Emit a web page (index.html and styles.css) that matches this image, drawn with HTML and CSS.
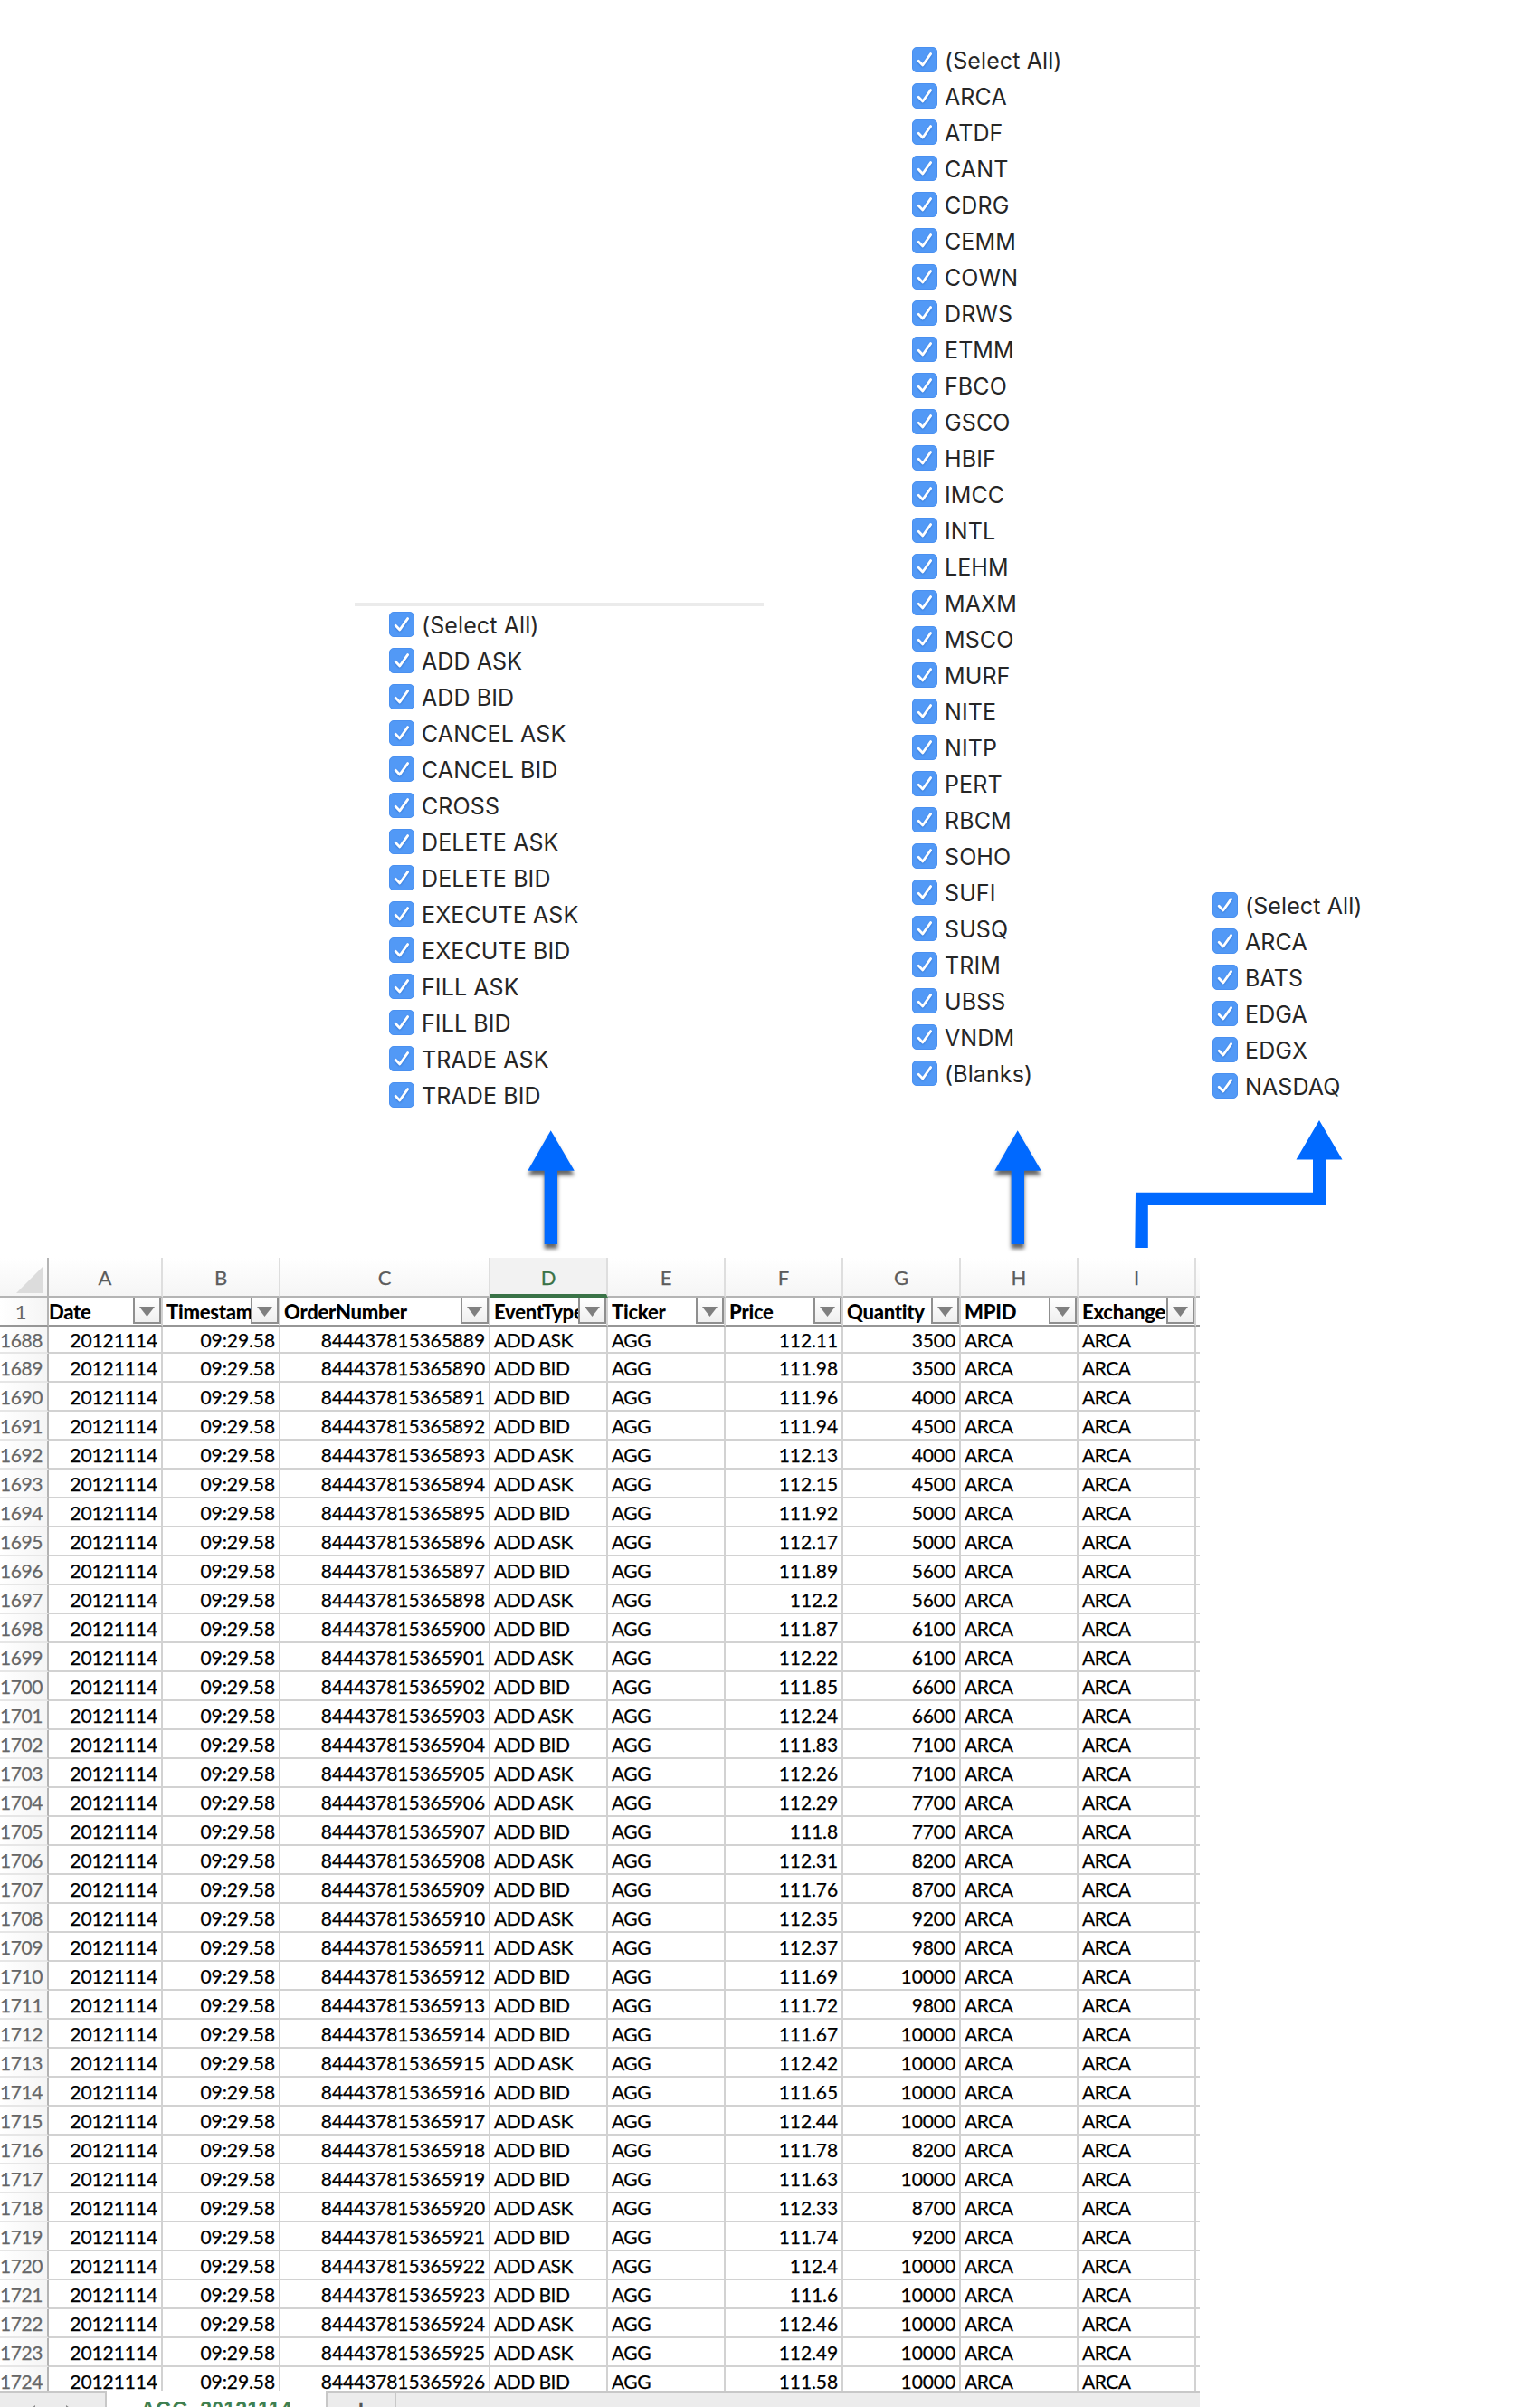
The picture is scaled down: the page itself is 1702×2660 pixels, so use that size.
FILE: index.html
```html
<!DOCTYPE html>
<html lang="en">

<head>
    <meta charset="UTF-8">
    <meta name="viewport" content="width=device-width, initial-scale=1.0">
    <title>AGG_20121114</title>
    <link rel="stylesheet" href="styles.css">
</head>

<body>
    <!-- Filter values for the EventType, MPID and Exchange columns -->
    <div class="filters">
        <div class="panel panel-event">
            <ul class="filter-list" id="eventList"></ul>
            <svg class="arrow arrow-event" width="72" height="141" viewBox="0 0 72 141">
                <path class="arrow-shadow" d="M36.7 0.3 L62.7 44.7 H44 V126 H29.7 V44.7 H11.3 Z" />
            </svg>
        </div>
        <div class="panel panel-mpid">
            <ul class="filter-list" id="mpidList"></ul>
            <svg class="arrow arrow-mpid" width="72" height="141" viewBox="0 0 72 141">
                <path class="arrow-shadow" d="M36.7 0.3 L62.7 44.7 H44 V126 H29.7 V44.7 H11.3 Z" />
            </svg>
        </div>
        <div class="panel panel-exchange">
            <ul class="filter-list" id="exchangeList"></ul>
            <svg class="arrow" width="260" height="152" viewBox="0 0 260 152">
                <path d="M218 0 L243.5 43.5 H225 V94 H28.8 V141 H14.3 L15 79.7 H211 V43.5 H192.5 Z" />
            </svg>
        </div>
    </div>

    <div class="sheet">
        <div class="grid">
            <div class="row letters" id="letters"></div>
            <div class="row titles" id="titles"></div>
            <div id="rows"></div>
        </div>
        <div class="tabs">
            <div class="tab-nav">
                <svg width="60" height="8" viewBox="0 0 60 8">
                    <path d="M11 6 L4 11 H11 Z M45 6 L52 11 H45 Z" />
                </svg>
            </div>
            <div class="tab-active">AGG_20121114</div>
            <div class="tab-add">+</div>
            <div class="tab-rest"></div>
        </div>
    </div>

    <script src="script.js"></script>
</body>

</html>
```
FILE: styles.css
```css
* {
    box-sizing: border-box;
}

body {
    margin: 0;
    width: 1702px;
    height: 2660px;
    overflow: hidden;
    background: #fff;
    font-family: Lato, "Liberation Sans", sans-serif;
}

/* Filter lists */
.filters {
    display: flex;
    align-items: flex-end;
    height: 1390px;
    padding-left: 392px;
}

.filter-list {
    list-style: none;
    margin: 0;
    padding: 0;
}

.filter-list li {
    display: flex;
    align-items: center;
    height: 40px;
    gap: 8px;
    font-family: Inter, "Liberation Sans", sans-serif;
    font-size: 25px;
    letter-spacing: 0.1px;
    color: #262626;
    white-space: nowrap;
}

.filter-list span {
    padding-top: 2px;
}

.check {
    flex: none;
    width: 28px;
    height: 28px;
    border-radius: 5px;
    background: #5299f6;
    border: 1px solid #4a90f0;
}

.check path {
    fill: none;
    stroke: #fff;
    stroke-width: 2.8;
    stroke-linecap: round;
    stroke-linejoin: round;
    filter: drop-shadow(0 1px 1px rgba(0, 60, 150, 0.35));
}

.panel-event {
    width: 452px;
    margin-right: 164px;
    border-top: 4px solid #ebebeb;
}

.panel-event .filter-list {
    padding-left: 38px;
}

.panel-mpid {
    width: 232px;
}

.panel-exchange .filter-list {
    padding-left: 100px;
}

.arrow {
    display: block;
    fill: #0069ff;
}

.arrow-event {
    margin: 19px 0 0 180px;
}

.arrow-mpid {
    margin: 43px 0 0 80px;
}

.arrow-shadow {
    filter: drop-shadow(0 5px 2px rgba(0, 0, 0, 0.6));
}

.panel-exchange .arrow {
    margin-top: 18px;
}

/* Spreadsheet */
.sheet {
    width: 1326px;
    height: 1270px;
}

.grid {
    height: 1252px;
    overflow: hidden;
}

.row {
    display: grid;
    grid-template-columns: 54px 126px 130px 232px repeat(6, 130px) 4px;
    height: 32px;
    font-size: 21px;
    line-height: 30px;
    color: #000;
}

.row > div {
    border-right: 2px solid #d2d2d2;
    border-bottom: 2px solid #d2d2d2;
    padding: 1px 4px 0 4px;
    white-space: nowrap;
    overflow: hidden;
    -webkit-text-stroke: 0.25px currentColor;
}

.row > div:last-child {
    border-right: none;
    padding: 0;
}

.row > .num {
    text-align: right;
    letter-spacing: -0.1px;
}

.row > .txt {
    letter-spacing: -0.5px;
}

.row > .row-no {
    padding: 1px 5px 0 0;
    text-align: right;
    color: #666;
    border-right-color: #b4b4b4;
    border-bottom-color: #e6e6e6;
    background: linear-gradient(to right, #fff, #f5f5f5);
    letter-spacing: -0.4px;
}

#rows .row:first-child {
    height: 30px;
    line-height: 27px;
}

.letters {
    height: 44px;
}

.row.letters > div {
    padding: 0;
    text-align: center;
    line-height: 44px;
    font-size: 22px;
    color: #5c5c5c;
    border-right-color: #dedede;
    border-bottom-color: #b4b4b4;
    background: linear-gradient(#fff, #f5f5f5);
}

.row.letters > .corner {
    display: flex;
    justify-content: flex-end;
    padding: 9px 4px 0 0;
    border-right-color: #b4b4b4;
}

.row.letters > .selected {
    color: #3a7347;
    background: #f2f2f2;
    border-bottom: 4px solid #3a7347;
}

.row.titles > div {
    display: flex;
    justify-content: space-between;
    padding: 0 0 0 4px;
    border-bottom-color: #969696;
    font-weight: 900;
    font-size: 22px;
    letter-spacing: -0.25px;
    -webkit-text-stroke: 0;
    line-height: 31px;
}

.row.titles > .row-no {
    display: block;
    padding: 0 6px 0 0;
    text-align: center;
    font-weight: 400;
    background: linear-gradient(to right, #fff, #f5f5f5);
}

.row.titles > .row-no + div {
    padding-left: 0;
}

.title-text {
    flex: 1;
    min-width: 0;
    overflow: hidden;
}

.drop {
    flex: none;
    width: 31px;
    height: 29px;
    border: solid #8f8f8f;
    border-width: 0 2px 2px;
    background: linear-gradient(#fff, #efefef);
}

.drop svg {
    display: block;
    margin: 10px 0 0 5px;
    fill: #7f7f7f;
}

/* Sheet tabs */
.tabs {
    display: flex;
    height: 18px;
    overflow: hidden;
}

.tab-nav,
.tab-add,
.tab-rest {
    border-top: 2px solid #c8c8c8;
    border-right: 2px solid #c8c8c8;
    background: #ececec;
}

.tab-nav {
    width: 118px;
    padding: 8px 0 0 28px;
}

.tab-nav svg {
    display: block;
    fill: #888;
}

.tab-active {
    width: 242px;
    padding-top: 8px;
    text-align: center;
    font-family: "Liberation Sans", Arial, sans-serif;
    font-size: 23px;
    line-height: 26px;
    font-weight: bold;
    letter-spacing: 0.2px;
    color: #3f7f50;
}

.tab-add {
    width: 78px;
    border-left: 2px solid #c8c8c8;
    text-align: center;
    font: bold 28px/38px "Liberation Sans", Arial, sans-serif;
    color: #555;
}

.tab-rest {
    flex: 1;
    border-right: none;
}
```
FILE: script.js
```js
const eventTypes = ['ADD ASK', 'ADD BID', 'CANCEL ASK', 'CANCEL BID', 'CROSS', 'DELETE ASK', 'DELETE BID',
    'EXECUTE ASK', 'EXECUTE BID', 'FILL ASK', 'FILL BID', 'TRADE ASK', 'TRADE BID'];
const mpids = ['ARCA', 'ATDF', 'CANT', 'CDRG', 'CEMM', 'COWN', 'DRWS', 'ETMM', 'FBCO', 'GSCO', 'HBIF', 'IMCC',
    'INTL', 'LEHM', 'MAXM', 'MSCO', 'MURF', 'NITE', 'NITP', 'PERT', 'RBCM', 'SOHO', 'SUFI', 'SUSQ', 'TRIM',
    'UBSS', 'VNDM', '(Blanks)'];
const exchanges = ['ARCA', 'BATS', 'EDGA', 'EDGX', 'NASDAQ'];

const titles = ['Date', 'Timestamp', 'OrderNumber', 'EventType', 'Ticker', 'Price', 'Quantity', 'MPID', 'Exchange'];

// last digits of the order number, side, price, quantity
const orders = [
    [889, 'ASK', 112.11, 3500], [890, 'BID', 111.98, 3500], [891, 'BID', 111.96, 4000],
    [892, 'BID', 111.94, 4500], [893, 'ASK', 112.13, 4000], [894, 'ASK', 112.15, 4500],
    [895, 'BID', 111.92, 5000], [896, 'ASK', 112.17, 5000], [897, 'BID', 111.89, 5600],
    [898, 'ASK', 112.2, 5600], [900, 'BID', 111.87, 6100], [901, 'ASK', 112.22, 6100],
    [902, 'BID', 111.85, 6600], [903, 'ASK', 112.24, 6600], [904, 'BID', 111.83, 7100],
    [905, 'ASK', 112.26, 7100], [906, 'ASK', 112.29, 7700], [907, 'BID', 111.8, 7700],
    [908, 'ASK', 112.31, 8200], [909, 'BID', 111.76, 8700], [910, 'ASK', 112.35, 9200],
    [911, 'ASK', 112.37, 9800], [912, 'BID', 111.69, 10000], [913, 'BID', 111.72, 9800],
    [914, 'BID', 111.67, 10000], [915, 'ASK', 112.42, 10000], [916, 'BID', 111.65, 10000],
    [917, 'ASK', 112.44, 10000], [918, 'BID', 111.78, 8200], [919, 'BID', 111.63, 10000],
    [920, 'ASK', 112.33, 8700], [921, 'BID', 111.74, 9200], [922, 'ASK', 112.4, 10000],
    [923, 'BID', 111.6, 10000], [924, 'ASK', 112.46, 10000], [925, 'ASK', 112.49, 10000],
    [926, 'BID', 111.58, 10000]
];

function fillList(id, items) {
    document.getElementById(id).innerHTML = ['(Select All)', ...items].map(item => `
        <li>
            <svg class="check" viewBox="0 0 26 26"><path d="M6.2 14.2 L10.8 19 L19.6 6.6" /></svg>
            <span>${item}</span>
        </li>`).join('');
}

fillList('eventList', eventTypes);
fillList('mpidList', mpids);
fillList('exchangeList', exchanges);

// Column letters
document.getElementById('letters').innerHTML =
    '<div class="corner"><svg width="30" height="30"><path d="M30 0 V30 H0 Z" fill="#dcdcdc" /></svg></div>' +
    'ABCDEFGHI'.split('').map(l => `<div class="${l === 'D' ? 'selected' : ''}">${l}</div>`).join('') +
    '<div></div>';

// Title row with the filter buttons
document.getElementById('titles').innerHTML = '<div class="row-no">1</div>' +
    titles.map(t => `<div><span class="title-text">${t}</span><span class="drop">
        <svg width="17" height="11"><path d="M0 0 H17 L8.5 11 Z" /></svg></span></div>`).join('') +
    '<div></div>';

document.getElementById('rows').innerHTML = orders.map(([no, side, price, qty], i) => `
    <div class="row">
        <div class="row-no">${1688 + i}</div>
        <div class="num">20121114</div>
        <div class="num">09:29.58</div>
        <div class="num">844437815365${no}</div>
        <div class="txt">ADD ${side}</div>
        <div class="txt">AGG</div>
        <div class="num">${price}</div>
        <div class="num">${qty}</div>
        <div class="txt">ARCA</div>
        <div class="txt">ARCA</div>
        <div></div>
    </div>`).join('');
```
